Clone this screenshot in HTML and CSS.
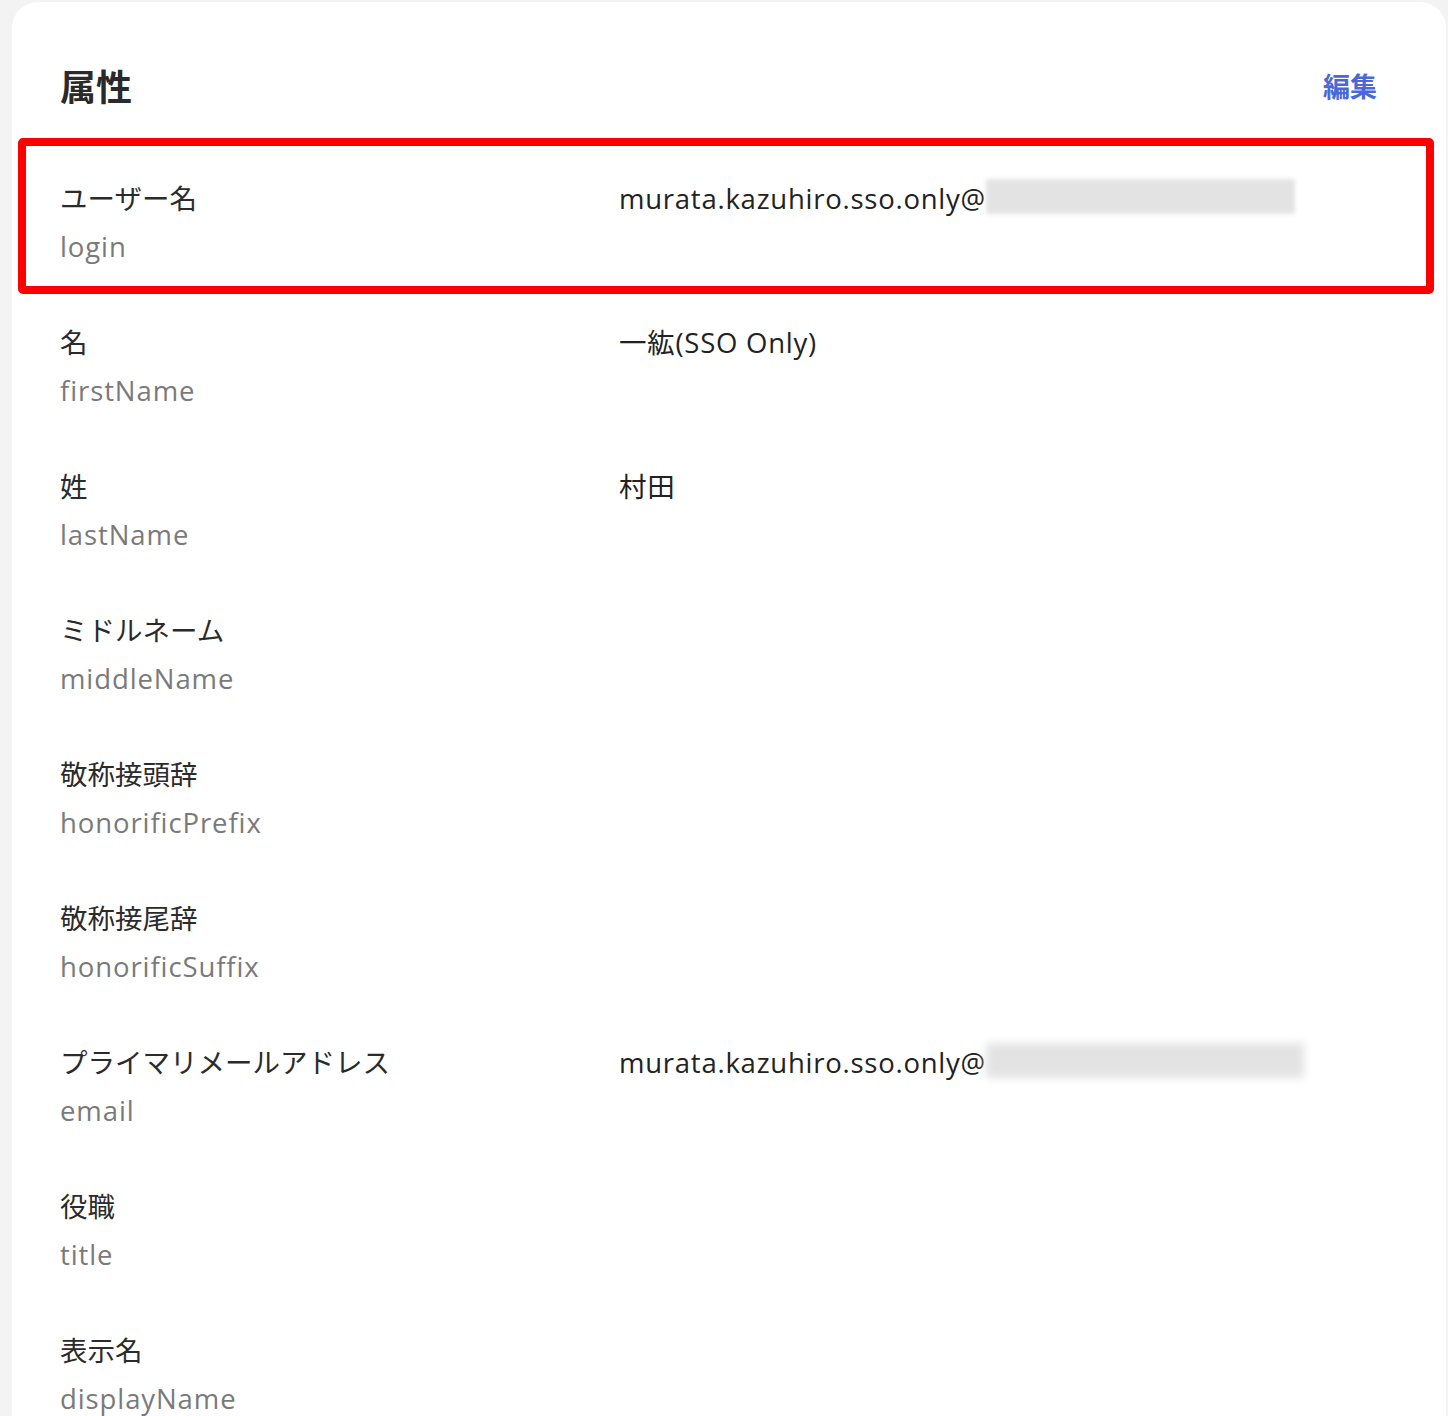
FILE: index.html
```html
<!DOCTYPE html>
<html lang="ja">
<head>
    <meta charset="UTF-8">
    <meta name="viewport" content="width=device-width, initial-scale=1.0">
    <title>属性</title>
    <link rel="stylesheet" href="styles.css">
</head>
<body>
    <div class="card">
        <div class="card-head">
            <h2 class="title">属性</h2>
            <a class="edit" href="#">編集</a>
        </div>

        <div class="row marked">
            <div class="label">
                <div class="name">ユーザー名</div>
                <div class="key">login</div>
            </div>
            <div class="value">murata.kazuhiro.sso.only@<span class="blur"></span></div>
        </div>

        <div class="row">
            <div class="label">
                <div class="name">名</div>
                <div class="key">firstName</div>
            </div>
            <div class="value">一紘(SSO Only)</div>
        </div>

        <div class="row">
            <div class="label">
                <div class="name">姓</div>
                <div class="key">lastName</div>
            </div>
            <div class="value">村田</div>
        </div>

        <div class="row">
            <div class="label">
                <div class="name">ミドルネーム</div>
                <div class="key">middleName</div>
            </div>
            <div class="value"></div>
        </div>

        <div class="row">
            <div class="label">
                <div class="name">敬称接頭辞</div>
                <div class="key">honorificPrefix</div>
            </div>
            <div class="value"></div>
        </div>

        <div class="row">
            <div class="label">
                <div class="name">敬称接尾辞</div>
                <div class="key">honorificSuffix</div>
            </div>
            <div class="value"></div>
        </div>

        <div class="row">
            <div class="label">
                <div class="name">プライマリメールアドレス</div>
                <div class="key">email</div>
            </div>
            <div class="value">murata.kazuhiro.sso.only@<span class="blur wide"></span></div>
        </div>

        <div class="row">
            <div class="label">
                <div class="name">役職</div>
                <div class="key">title</div>
            </div>
            <div class="value"></div>
        </div>

        <div class="row">
            <div class="label">
                <div class="name">表示名</div>
                <div class="key">displayName</div>
            </div>
            <div class="value"></div>
        </div>
    </div>
</body>
</html>
```

FILE: styles.css
```css
body{
    margin: 0;
    padding: 2px 2px 0 12px;
    background: #f3f3f3;
    font-family: "Open Sans", "Noto Sans CJK JP", sans-serif;
    overflow: hidden;
}

.card{
    background: #fff;
    border-radius: 26px 26px 0 0;
    padding-bottom: 40px;
}

.card-head{
    height: 142px;
    box-sizing: border-box;
    padding: 24px 69px 0 48px;
    display: flex;
    align-items: center;
    justify-content: space-between;
}

.title{
    margin: 0;
    font-size: 36px;
    font-weight: bold;
    color: #2a2a2a;
    font-family: "Noto Sans CJK JP", sans-serif;
}

.edit{
    font-size: 27px;
    font-weight: bold;
    color: #4a68d8;
    text-decoration: none;
    font-family: "Noto Sans CJK JP", sans-serif;
}

.row{
    display: grid;
    grid-template-columns: 559px 1fr;
    padding: 31px 48px 17px;
    height: 144px;
    box-sizing: border-box;
    position: relative;
    font-size: 27.5px;
    line-height: 48px;
}

.row .name{
    color: #2b2b2b;
}

.row .key{
    color: #7a7a7a;
    letter-spacing: 0.9px;
}

.row .value{
    color: #222;
    white-space: nowrap;
    letter-spacing: 0.75px;
}

/* red annotation box round the first row */
.marked::after{
    content: "";
    position: absolute;
    top: -6px;
    bottom: -6px;
    left: 6px;
    right: 12px;
    border: 8px solid #ff0000;
    border-radius: 5px;
}

.blur{
    display: inline-block;
    vertical-align: top;
    margin-top: 4px;
    width: 309px;
    height: 35px;
    background: #e3e3e3;
    filter: blur(2px);
}

.blur.wide{
    width: 318px;
    filter: blur(4px);
}
```
